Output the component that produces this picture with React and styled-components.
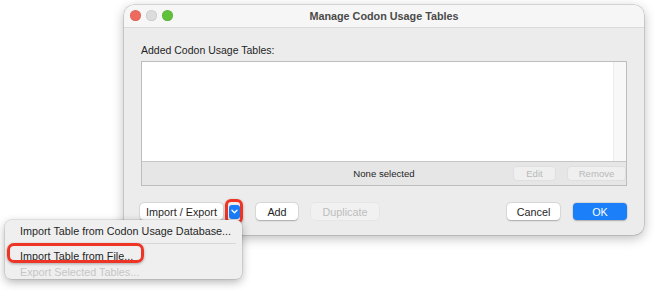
import React from 'react';
import styled, { createGlobalStyle } from 'styled-components';

const GlobalStyle = createGlobalStyle`
    html, body {
        margin: 0;
        padding: 0;
        background: #ffffff;
    }
    body {
        font-family: "Liberation Sans", Arial, sans-serif;
        color: #222;
    }
`;

const Page = styled.div`
    position: relative;
    width: 655px;
    height: 291px;
    padding: 5px 0 0 124px;
    box-sizing: border-box;
    overflow: hidden;
`;

const Window = styled.div`
    width: 520px;
    height: 230px;
    background: #ececec;
    border-radius: 10px;
    overflow: hidden;
    box-shadow: 0 3px 12px rgba(0, 0, 0, 0.28), 0 0 0 0.5px rgba(0, 0, 0, 0.22);
    display: flex;
    flex-direction: column;
`;

const TitleBar = styled.div`
    position: relative;
    height: 22px;
    background: #f6f6f6;
    border-bottom: 1px solid #dadada;
    display: flex;
    align-items: center;
    justify-content: center;
    font-size: 10.8px;
    font-weight: bold;
    color: #4a4a4a;
`;

const Lights = styled.div`
    position: absolute;
    left: 6px;
    top: 5px;
    display: flex;
    gap: 5px;
`;

const Light = styled.span`
    width: 11px;
    height: 11px;
    border-radius: 50%;
    background: ${p => p.color};
    box-shadow: inset 0 0 0 0.5px rgba(0, 0, 0, 0.12);
`;

const Body = styled.div`
    flex: 1;
    display: flex;
    flex-direction: column;
    padding: 15px 17px 0 17px;
`;

const Label = styled.div`
    font-size: 10.5px;
    line-height: 14px;
    color: #1f1f1f;
    margin-bottom: 4px;
`;

const List = styled.div`
    height: 123px;
    border: 1px solid #bdbdbd;
    display: flex;
    flex-direction: column;
    background: #fff;
`;

const ListArea = styled.div`
    flex: 1;
    display: flex;
    justify-content: flex-end;
`;

const ScrollTrack = styled.div`
    width: 12px;
    background: #f8f8f8;
    border-left: 1px solid #ebebeb;
`;

const StatusBar = styled.div`
    height: 23px;
    background: #e6e6e6;
    border-top: 1px solid #c6c6c6;
    display: grid;
    grid-template-columns: 1fr auto 1fr;
    align-items: center;
`;

const StatusText = styled.span`
    font-size: 9.6px;
    color: #1f1f1f;
`;

const StatusButtons = styled.div`
    display: flex;
    justify-content: flex-end;
    gap: 13px;
    padding-right: 1px;
`;

const SmallButton = styled.span`
    width: ${p => p.w}px;
    height: 13px;
    border-radius: 3px;
    background: #efefef;
    box-shadow: 0 0 0 0.5px rgba(0, 0, 0, 0.06);
    font-size: 9.6px;
    color: #b9b9b9;
    display: flex;
    align-items: center;
    justify-content: center;
`;

const ButtonRow = styled.div`
    display: flex;
    align-items: center;
    margin-top: 13px;
    margin-left: -1px;
`;

const Button = styled.span`
    width: ${p => p.w}px;
    height: 17px;
    box-sizing: border-box;
    border-radius: 4px;
    display: flex;
    align-items: center;
    justify-content: center;
    font-size: 10.8px;
    background: ${p => (p.primary ? '#1a7ff8' : p.disabled ? '#f1f1f1' : '#ffffff')};
    color: ${p => (p.primary ? '#ffffff' : p.disabled ? '#bdbdbd' : '#1f1f1f')};
    box-shadow: ${p =>
        p.disabled
            ? '0 0 0 0.5px rgba(0,0,0,0.05)'
            : '0 0.5px 1.5px rgba(0,0,0,0.25), 0 0 0 0.5px rgba(0,0,0,0.08)'};
    margin-left: ${p => p.gap || 0}px;
`;

const Spacer = styled.div`
    flex: 1;
`;

const Ring = styled.span`
    margin-left: 2px;
    width: 18px;
    height: 25px;
    box-sizing: border-box;
    border: 3px solid #ee3424;
    border-radius: 6px;
    display: flex;
    align-items: center;
    justify-content: center;
    box-shadow: 0 1px 3px rgba(0, 0, 0, 0.3);
`;

const DropButton = styled.span`
    width: 11px;
    height: 14px;
    border-radius: 3px;
    background: #1a7cf7;
    display: flex;
    align-items: center;
    justify-content: center;
`;

const Menu = styled.div`
    position: absolute;
    left: 5px;
    top: 220px;
    width: 237px;
    height: 59px;
    box-sizing: border-box;
    background: #efefef;
    border-radius: 6px;
    box-shadow: 0 3px 10px rgba(0, 0, 0, 0.3), 0 0 0 0.5px rgba(0, 0, 0, 0.15);
    padding-top: 3px;
    overflow: hidden;
`;

const MenuItem = styled.div`
    height: 16px;
    line-height: 16px;
    padding-left: 15px;
    font-size: 10.8px;
    color: ${p => (p.disabled ? '#c6c6c6' : '#1f1f1f')};
    white-space: nowrap;
`;

const Separator = styled.div`
    height: 1px;
    background: #d8d8d8;
    margin: 4px 6px 4px 6px;
`;

const Highlight = styled.div`
    position: absolute;
    left: 2px;
    top: 23px;
    width: 137px;
    height: 20px;
    box-sizing: border-box;
    border: 3px solid #ee3424;
    border-radius: 7px;
    box-shadow: 0 1px 3px rgba(0, 0, 0, 0.3);
`;

const Chevron = () => (
    <svg width="7" height="5" viewBox="0 0 7 5">
        <path d="M1 1.2 L3.5 3.7 L6 1.2" fill="none" stroke="#fff" strokeWidth="1.3" strokeLinecap="round" strokeLinejoin="round" />
    </svg>
);

const App = () => {
    return (
        <>
            <GlobalStyle />
            <Page>
                <Window>
                    <TitleBar>
                        <Lights>
                            <Light color="#ee6a5e" />
                            <Light color="#dcdcdc" />
                            <Light color="#5fc13a" />
                        </Lights>
                        Manage Codon Usage Tables
                    </TitleBar>
                    <Body>
                        <Label>Added Codon Usage Tables:</Label>
                        <List>
                            <ListArea>
                                <ScrollTrack />
                            </ListArea>
                            <StatusBar>
                                <span />
                                <StatusText>None selected</StatusText>
                                <StatusButtons>
                                    <SmallButton w={41}>Edit</SmallButton>
                                    <SmallButton w={57}>Remove</SmallButton>
                                </StatusButtons>
                            </StatusBar>
                        </List>
                        <ButtonRow>
                            <Button w={83}>Import / Export</Button>
                            <Ring>
                                <DropButton>
                                    <Chevron />
                                </DropButton>
                            </Ring>
                            <Button w={42} gap={13}>Add</Button>
                            <Button w={68} gap={13} disabled>Duplicate</Button>
                            <Spacer />
                            <Button w={53}>Cancel</Button>
                            <Button w={54} gap={13} primary>OK</Button>
                        </ButtonRow>
                    </Body>
                </Window>
                <Menu>
                    <MenuItem>Import Table from Codon Usage Database...</MenuItem>
                    <Separator />
                    <MenuItem>Import Table from File...</MenuItem>
                    <MenuItem disabled>Export Selected Tables...</MenuItem>
                    <Highlight />
                </Menu>
            </Page>
        </>
    );
};

export default App;
